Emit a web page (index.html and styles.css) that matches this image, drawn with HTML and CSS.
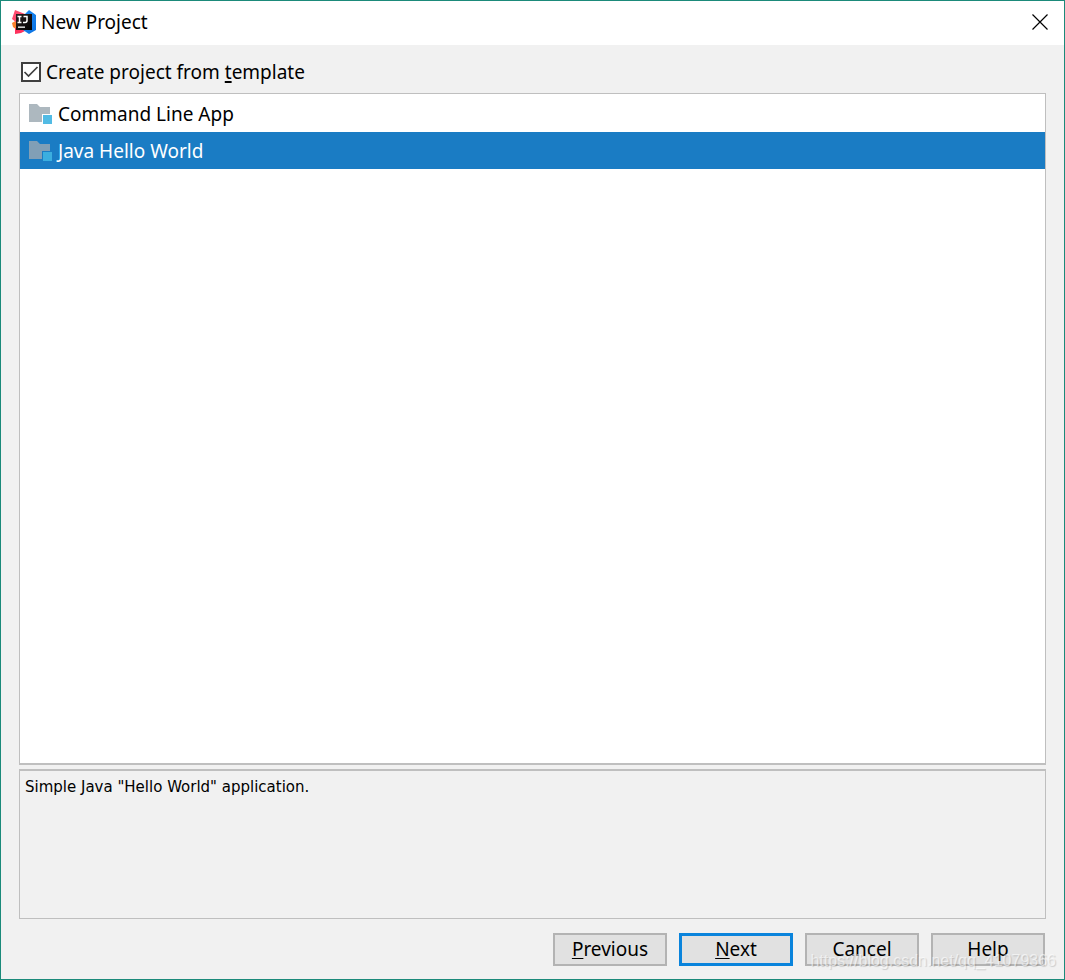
FILE: index.html
```html
<!DOCTYPE html>
<html lang="en">
<head>
<meta charset="utf-8">
<title>New Project</title>
<link rel="stylesheet" href="styles.css">
</head>
<body>
<svg class="defs" aria-hidden="true">
  <symbol id="folder" viewBox="0 0 24 22">
    <path class="folder-body" d="M0 1h8l3 3h10v7h-8v8H0z"/>
    <rect class="folder-badge" x="14" y="12" width="9" height="9"/>
  </symbol>
</svg>
<main class="window">
  <header class="titlebar">
    <svg class="logo" viewBox="0 0 24 24" aria-hidden="true">
      <defs>
        <linearGradient id="blue" x1="0" y1="0" x2="1" y2="1"><stop offset="0" stop-color="#1c8df5"/><stop offset="1" stop-color="#0a70e0"/></linearGradient>
        <linearGradient id="ink" x1="0" y1="0" x2="1" y2="1"><stop offset="0" stop-color="#2a2022"/><stop offset="1" stop-color="#000"/></linearGradient>
      </defs>
      <path fill="#f9802d" d="M0 13l5-3v10l-4-3z"/>
      <path fill="#fe4a6d" d="M3 0l10 4-8 9-5-4z"/>
      <path fill="#fe315d" d="M3 18l12 2-6 3-6 1z"/>
      <path fill="url(#blue)" d="M13 4l4-4 7 5v15l-7 4-6-4 9-2z"/>
      <rect x="4" y="4" width="16" height="16" fill="url(#ink)"/>
      <path fill="none" stroke="#fff" stroke-width="1.500" d="M5.500 6.500h4M7.500 6.500v6M5.500 12.500h4M11.500 6.500h3.500v4q0 2-2 2h-2"/>
      <path fill="#fff" d="M6 16.500h7v1.300H6z"/>
    </svg>
    <h1 class="title">New Project</h1>
    <button class="close" type="button" aria-label="Close">
      <svg viewBox="0 0 16 16" width="16" height="16" aria-hidden="true"><path d="M.5.5l15 15M15.500.5l-15 15" stroke="#000" stroke-width="1.200"/></svg>
    </button>
  </header>
  <div class="content">
    <div class="option">
      <span class="tickbox">
        <input class="check" type="checkbox" id="from-template" checked>
        <svg class="tick" viewBox="0 0 20 20" aria-hidden="true"><path d="M3.500 10l4 4 9-9" fill="none" stroke="#404040" stroke-width="1.700"/></svg>
      </span>
      <label for="from-template">Create project from <u>t</u>emplate</label>
    </div>
    <ul class="list" role="listbox" aria-label="Templates">
      <li class="item" role="option" aria-selected="false"><svg class="folder" aria-hidden="true"><use href="#folder"/></svg>Command Line App</li>
      <li class="item selected" role="option" aria-selected="true"><svg class="folder" aria-hidden="true"><use href="#folder"/></svg>Java Hello World</li>
    </ul>
    <p class="description">Simple Java "Hello World" application.</p>
    <footer class="actions">
      <button class="btn" type="button"><span><u>P</u>revious</span></button>
      <button class="btn primary" type="button"><span><u>N</u>ext</span></button>
      <button class="btn" type="button">Cancel</button>
      <button class="btn" type="button">Help</button>
    </footer>
  </div>
  <span class="watermark">https://blog.csdn.net/qq_41079366</span>
</main>
</body>
</html>
```
FILE: styles.css
```css
* { box-sizing: border-box; }
body {
  margin: 0;
  font-family: "Noto Sans", "Open Sans", sans-serif;
  font-size: 19px;
  line-height: 26px;
  color: #000;
}
.defs { position: absolute; width: 0; height: 0; }
.window {
  position: relative;
  display: flex;
  flex-direction: column;
  min-height: 100vh;
  border: 1px solid #1b8a7a;
  background: #f1f1f1;
}
.titlebar {
  display: flex;
  align-items: center;
  gap: 5px;
  height: 44px;
  padding: 0 16px 2px 11px;
  background: #fff;
}
.logo { width: 24px; height: 24px; }
.title { flex: 1; margin: 0; font-size: 19px; line-height: 26px; font-weight: 400; }
.close {
  display: flex;
  padding: 0;
  border: 0;
  background: none;
}
.content {
  flex: 1;
  display: flex;
  flex-direction: column;
  padding: 14px 18px 13px;
}
.option {
  display: flex;
  align-items: center;
  gap: 5px;
  height: 26px;
  margin: 0 0 8px 2px;
}
.tickbox { display: grid; width: 20px; height: 20px; }
.check, .tick { grid-area: 1 / 1; width: 20px; height: 20px; margin: 0; }
.check {
  appearance: none;
  border: 2px solid #404040;
  background: #fff;
}
.tick { visibility: hidden; pointer-events: none; }
.check:checked + .tick { visibility: visible; }
u { text-decoration-thickness: 2px; text-underline-offset: 2px; text-decoration-skip-ink: none; }
.list {
  flex: 1;
  margin: 0 0 4px;
  padding: 0;
  list-style: none;
  background: #fff;
  border: 1px solid #bfbfbf;
  border-bottom-width: 2px;
}
.item {
  --body: #adb8bf;
  --badge: #52bbe4;
  display: flex;
  align-items: center;
  gap: 5px;
  height: 38px;
  padding: 1px 0 0 9px;
}
.selected {
  --body: #819fb6;
  --badge: #3baedf;
  height: 37px;
  background: #1a7cc4;
  color: #fff;
}
.folder { width: 24px; height: 22px; }
.folder-body { fill: var(--body); }
.folder-badge { fill: var(--badge); }
.description {
  height: 150px;
  margin: 0 0 14px;
  padding: 6px 5px;
  border: 1px solid #bfbfbf;
  border-top-width: 2px;
  font-family: "DejaVu Sans", Verdana, sans-serif;
  font-size: 15px;
  line-height: 20px;
}
.actions {
  display: flex;
  justify-content: flex-end;
  gap: 12px;
  padding-right: 1px;
}
.btn {
  width: 114px;
  height: 33px;
  padding: 0 0 2px;
  border: 2px solid #b3b3b3;
  background: #e1e1e1;
  font: inherit;
  color: #000;
}
.btn u { text-decoration-thickness: 1px; }
.primary { border: 3px solid #0a84dc; }
.watermark {
  position: absolute;
  right: 8px;
  bottom: 8px;
  font-family: "Liberation Sans", Arial, sans-serif;
  font-size: 16px;
  line-height: 20px;
  color: rgba(255, 255, 255, 0.6);
  text-shadow: 1px 1px 1px rgba(0, 0, 0, 0.15);
  pointer-events: none;
}
```
